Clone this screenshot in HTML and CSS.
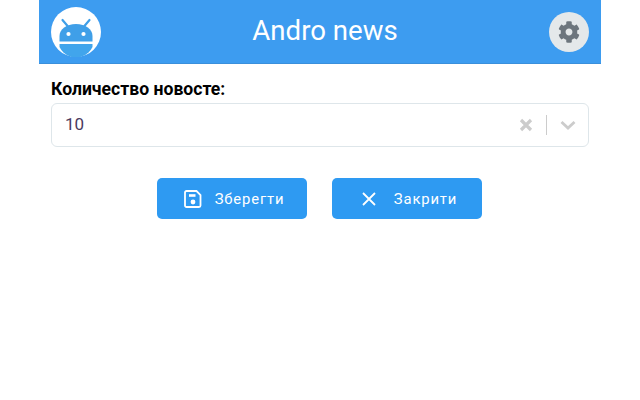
FILE: index.html
```html
<!DOCTYPE html>
<html lang="uk">
<head>
<meta charset="utf-8">
<title>Andro news</title>
<link rel="stylesheet" href="styles.css">
</head>
<body>
<div class="app">
  <header class="header">
    <div class="logo">
      <svg width="50" height="50" viewBox="0 0 50 50">
        <circle cx="25" cy="25" r="25" fill="#fff"/>
        <path d="M8.500 37h33v3a20 20 0 0 1-4 5.500a18 18 0 0 1-25 0a20 20 0 0 1-4-5.500z" fill="#41a5ec"/>
        <path d="M8.500 34.500v-5.500c0-7 7-12 16.500-12s16.500 5 16.500 12v5.500z" fill="#3f9fe8"/>
        <path d="M17 19.500l-5.500-6.500M33 19.500l5.500-6.500" stroke="#3f9fe8" stroke-width="2.200" stroke-linecap="round"/>
        <circle cx="17.500" cy="27" r="2.100" fill="#fff"/>
        <circle cx="32.500" cy="27" r="2.100" fill="#fff"/>
      </svg>
    </div>
    <h1 class="title">Andro news</h1>
    <div class="settings">
      <svg width="22" height="22" viewBox="0 0 512 512"><path fill="#6c757d" d="M487.4 315.700l-42.600-24.600c4.300-23.200 4.300-47 0-70.200l42.600-24.600c4.900-2.800 7.100-8.600 5.500-14-11.100-35.600-30-67.800-54.700-94.600-3.800-4.100-10-5.100-14.800-2.300L380.800 110c-17.900-15.400-38.500-27.300-60.800-35.100V25.800c0-5.600-3.900-10.500-9.400-11.700-36.700-8.200-74.300-7.800-109.200 0-5.500 1.200-9.400 6.100-9.400 11.700V75c-22.200 7.900-42.800 19.800-60.800 35.100L88.700 85.500c-4.900-2.800-11-1.900-14.800 2.300-24.700 26.700-43.600 58.900-54.700 94.600-1.700 5.400.6 11.200 5.500 14L67.300 221c-4.300 23.200-4.300 47 0 70.200l-42.600 24.600c-4.900 2.800-7.100 8.600-5.500 14 11.100 35.600 30 67.800 54.700 94.600 3.800 4.100 10 5.100 14.800 2.300l42.600-24.600c17.900 15.400 38.500 27.300 60.800 35.100v49.200c0 5.600 3.900 10.500 9.400 11.700 36.700 8.200 74.300 7.800 109.200 0 5.500-1.200 9.400-6.100 9.400-11.700v-49.200c22.200-7.900 42.800-19.800 60.800-35.100l42.600 24.600c4.900 2.800 11 1.900 14.800-2.300 24.700-26.700 43.600-58.900 54.700-94.600 1.500-5.500-.7-11.300-5.600-14.100zM256 336c-44.100 0-80-35.900-80-80s35.900-80 80-80 80 35.900 80 80-35.900 80-80 80z"/></svg>
    </div>
  </header>
  <main class="content">
    <label class="label">Количество новосте:</label>
    <div class="select">
      <span class="value">10</span>
      <span class="controls">
        <svg class="clear" width="14" height="14" viewBox="0 0 14 14"><path d="M2 2l10 10M12 2L2 12" stroke="#ccc" stroke-width="3.200"/></svg>
        <span class="sep"></span>
        <svg class="chev" width="16" height="10" viewBox="0 0 16 10"><path d="M1.500 2l6.500 6 6.500-6" fill="none" stroke="#ccc" stroke-width="2.800"/></svg>
      </span>
    </div>
    <div class="actions">
      <button class="btn btn-save" type="button">
        <svg width="18" height="18" viewBox="0 0 18 18"><path d="M2.500 1h10l4 4v10.500a1.500 1.500 0 0 1-1.500 1.500H2.500A1.500 1.500 0 0 1 1 15.500v-13A1.500 1.500 0 0 1 2.500 1z" fill="none" stroke="#fff" stroke-width="1.800"/><path d="M5 5.500h6.500" stroke="#fff" stroke-width="2.600"/><circle cx="9" cy="12" r="2.400" fill="#fff"/></svg>
        <span>Зберегти</span>
      </button>
      <button class="btn btn-close" type="button">
        <svg width="16" height="16" viewBox="0 0 16 16"><path d="M2 2l12 12M14 2L2 14" stroke="#fff" stroke-width="1.800"/></svg>
        <span>Закрити</span>
      </button>
    </div>
  </main>
</div>
</body>
</html>
```
FILE: styles.css
```css
* { box-sizing: border-box; }
html, body { margin: 0; padding: 0; background: #fff; }
body { font-family: Roboto, sans-serif; }
.app { width: 562px; margin: 0 auto; }
.header {
  height: 64px;
  background: #3d9cf0;
  border-bottom: 1px solid #3a8fdb;
  display: flex;
  align-items: center;
  justify-content: space-between;
  padding: 0 12px;
}
.logo { width: 50px; height: 50px; margin-top: 1px; }
.logo svg { display: block; }
.title { margin: 0 0 2px; font-size: 27.600px; font-weight: 400; color: #fff; line-height: 60px; }
.settings {
  width: 40px; height: 40px; border-radius: 50%;
  background: #e4e8ea;
  display: flex; align-items: center; justify-content: center;
}
.settings svg { display: block; }
.content { padding: 16px 12px 0; }
.label { display: block; font-size: 17.600px; font-weight: 700; color: #000; line-height: 19px; margin-bottom: 4px; }
.select {
  height: 44px;
  border: 1px solid #dee6ea;
  border-radius: 6px;
  display: flex;
  align-items: center;
  justify-content: space-between;
  padding: 0 12px 0 13px;
}
.value { font-size: 17px; color: #4a3a5e; margin-bottom: 2px; }
.controls { display: flex; align-items: center; gap: 13px; }
.controls svg { display: block; }
.sep { width: 1px; height: 20px; background: #ccc; }
.actions { display: flex; justify-content: center; gap: 25px; margin-top: 31px; padding-right: 1px; }
.btn {
  width: 150px; height: 41px;
  background: #2e9af2;
  color: #fff;
  border: 0; border-radius: 5px;
  font-family: Roboto, sans-serif;
  font-size: 14.800px; font-weight: 450;
  letter-spacing: 0.85px;
  display: flex; align-items: center; justify-content: center;
  padding: 0 0 0 4px;
}
.btn-save { gap: 13px; }
.btn-close { gap: 17px; }
.btn svg { display: block; }
```
